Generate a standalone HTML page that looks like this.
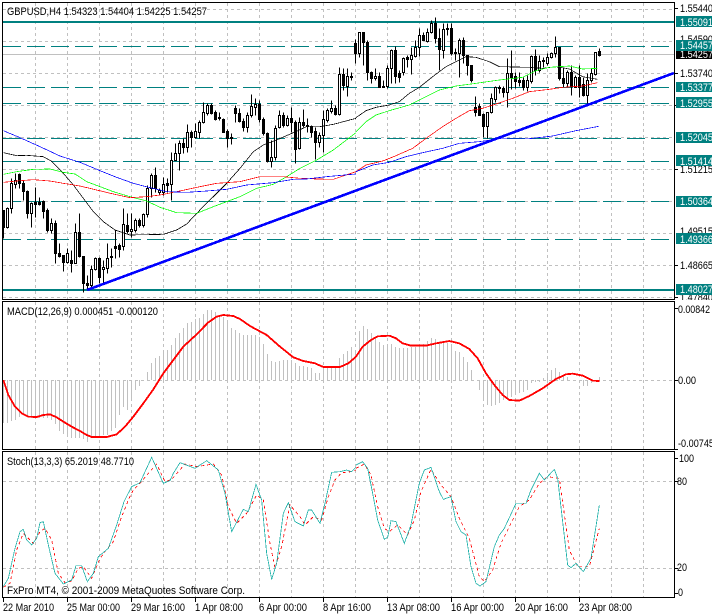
<!DOCTYPE html>
<html><head><meta charset="utf-8"><style>
html,body{margin:0;padding:0;background:#fff;width:712px;height:615px;overflow:hidden}
svg{display:block;position:absolute;left:0;top:0}
text{font-family:"Liberation Sans",sans-serif;font-size:11px;fill:#000}
.l{shape-rendering:crispEdges;fill:none}
</style></head><body>
<svg width="712" height="615" viewBox="0 0 712 615" xmlns="http://www.w3.org/2000/svg">
<rect width="712" height="615" fill="#fff"/>
<g id="grid" class="l" stroke="#c0c0c0" stroke-dasharray="3 3"></g>
<path class="l" d="M3 54.5H674" stroke="#c0c0c0"/>
<g class="l" stroke="#008080">
<path d="M3 22H674M3 290H674" stroke-width="2"/>
<path d="M3 46.5H674M3 87.5H674M3 103.5H674M3 138.5H674M3 161.5H674M3 201.5H674M3 239.5H674" stroke-dasharray="18 6"/>
</g>
<g id="hist" class="l" stroke="#c0c0c0"></g>
<g id="candles"></g>
<g class="l" stroke-width="2.2" transform="scale(.33333)">
<polyline stroke="#000" points="10,458 50,467 80,466 130,470 155,484 190,520 220,555 250,595 280,635 310,665 345,690 390,705 490,703 530,690 560,672 600,630 640,590 680,550 720,505 760,455 790,435 830,420 880,398 920,380 960,380 1000,373 1068,355"/>
<polyline stroke="#0f0" points="10,523 50,515 100,508 150,507 190,517 225,522 260,545 300,560 340,575 390,590 440,603 480,622 530,638 590,640 640,620 680,605 720,590 770,565 820,553 860,530 900,505 950,480 1000,450 1068,398"/>
<polyline stroke="#f00" points="10,547 50,543 100,539 150,543 190,550 240,558 290,570 340,582 390,593 440,590 480,585 530,575 600,560 650,550 720,545 780,530 850,530 900,535 950,537 1000,538 1068,515"/>
<polyline stroke="#00f" points="10,392 60,413 120,440 180,468 240,487 300,512 350,532 400,550 450,563 500,575 560,577 620,573 680,568 740,555 820,548 880,538 920,537 980,530 1068,522"/>
</g>
<g class="l" stroke-width="2.2" transform="translate(356 0) scale(.33333)">
<polyline stroke="#000" points="0,353 30,332 60,322 100,315 130,305 160,280 190,262 230,230 270,200 300,185 330,170 360,172 400,185 430,200 520,202 560,205 600,200 640,207 680,230 725,238"/>
<polyline stroke="#0f0" points="0,395 30,365 60,345 100,332 160,315 200,295 250,270 300,258 360,250 430,240 500,232 540,212 580,202 640,198 680,207 725,205"/>
<polyline stroke="#f00" points="0,515 30,495 80,483 120,467 170,445 220,408 260,380 300,355 340,332 380,325 420,312 470,295 520,275 580,268 620,262 680,258 725,248"/>
<polyline stroke="#00f" points="0,515 50,495 100,487 150,470 200,458 260,445 310,430 370,425 430,416 520,416 590,408 660,392 728,379"/>
</g>
<path class="l" d="M87 290L674 73" stroke="#0000ff" stroke-width="2.6"/>

<g class="l" stroke="#f00" stroke-width="5.5" stroke-linejoin="round" transform="translate(0 295) scale(.33333)">
<polyline points="10,255 25,300 45,335 65,355 85,365 110,366 130,360 150,358 170,367 190,380 215,395 240,408 260,420 275,426 320,426 350,418 375,395 400,365 430,325 460,283 490,235 520,195 550,155 590,118 625,82 650,65 670,60 700,63 720,72 750,93 800,120 840,155 880,187 910,198 945,205 970,216 1020,216 1045,205 1068,185"/>
</g>
<g class="l" stroke="#f00" stroke-width="5.5" stroke-linejoin="round" transform="translate(356 295) scale(.33333)">
<polyline points="0,185 20,155 45,135 65,124 100,122 120,130 140,145 165,152 210,152 240,145 280,138 310,145 340,162 365,190 390,235 415,270 440,300 460,315 490,317 520,303 560,280 600,252 630,238 650,236 680,242 710,257 730,258"/>
</g>

<g class="l" stroke-width="2.4" transform="translate(0 450) scale(.33333)">
<polyline stroke="#f00" stroke-dasharray="9 9" points="10,412 30,400 50,300 70,250 85,265 100,280 120,245 135,235 155,270 175,370 195,398 215,393 235,355 250,350 275,385 300,325 320,298 340,275 365,200 385,150 400,120 420,100 445,70 470,42 495,95 515,88 535,65 555,42 590,50 640,42 665,75 685,170 710,220 740,190 770,135 790,150 810,280 825,355 845,290 870,165 900,200 915,225 940,200 965,210 985,140 1005,90 1025,68 1055,65 1068,60"/>
<polyline stroke="#20b2aa" points="10,410 25,385 45,295 60,245 70,238 80,270 95,285 110,265 120,218 130,215 145,285 165,370 190,402 215,390 228,347 245,347 262,395 280,370 295,320 325,295 350,225 372,155 395,110 420,98 455,22 490,100 510,92 520,70 540,38 585,55 620,32 655,60 675,130 695,245 730,178 745,185 768,103 785,150 800,310 815,388 830,340 850,190 865,158 885,215 910,228 925,180 935,180 960,220 975,160 995,67 1020,65 1040,60 1055,65 1068,52"/>
</g>
<g class="l" stroke-width="2.4" transform="translate(356 450) scale(.33333)">
<polyline stroke="#f00" stroke-dasharray="9 9" points="0,55 25,42 45,75 65,170 85,235 100,245 125,225 155,255 175,210 195,125 225,58 255,105 285,140 310,205 340,265 370,380 385,395 410,360 435,280 470,210 490,170 520,150 550,100 575,80 610,85 640,300 665,350 700,350 730,235"/>
<polyline stroke="#20b2aa" points="0,45 20,35 35,55 50,130 65,210 85,268 95,262 105,212 120,215 145,280 165,225 190,100 205,60 225,52 250,125 262,148 285,140 300,215 315,245 330,255 345,350 360,400 372,408 390,395 415,290 430,255 445,235 480,160 510,160 525,120 550,70 565,90 595,58 605,85 635,345 645,353 660,340 682,365 705,325 730,165"/>
</g>

<g class="l" stroke="#000">
<rect x="2.5" y="2.5" width="672" height="297"/>
<rect x="2.5" y="301.5" width="672" height="148"/>
<rect x="2.5" y="451.5" width="672" height="146"/>
<path d="M675 8.5h3M675 73.5h3M675 169.5h3M675 265.5h3M675 297.5h3M675 105.5h3M675 308.5h3M675 380.5h3M675 449.5h3M675 458.5h3M675 481.5h3M675 568.5h3M675 593.5h3"/>
<path id="xt" d=""/>
</g>

<g>
<text x="680" y="12" textLength="33" lengthAdjust="spacingAndGlyphs">1.55440</text>
<text x="680" y="43" textLength="33" lengthAdjust="spacingAndGlyphs">1.54590</text>
<text x="680" y="77" textLength="33" lengthAdjust="spacingAndGlyphs">1.53740</text>
<text x="680" y="173" textLength="33" lengthAdjust="spacingAndGlyphs">1.51215</text>
<text x="680" y="235" textLength="33" lengthAdjust="spacingAndGlyphs">1.49515</text>
<text x="680" y="269" textLength="33" lengthAdjust="spacingAndGlyphs">1.48665</text>
<text x="680" y="301" textLength="33" lengthAdjust="spacingAndGlyphs">1.47840</text>
</g>
<rect x="675" y="300" width="37" height="3" fill="#fff"/>
<rect x="676" y="51" width="36" height="8" fill="#000"/>
<text x="680" y="58" textLength="33" lengthAdjust="spacingAndGlyphs" style="fill:#fff">1.54257</text>
<g fill="#008080">
<rect x="676" y="16" width="36" height="11"/>
<rect x="676" y="40" width="36" height="11"/>
<rect x="676" y="82" width="36" height="10"/>
<rect x="676" y="97" width="36" height="11"/>
<rect x="676" y="132" width="36" height="11"/>
<rect x="676" y="155" width="36" height="11"/>
<rect x="676" y="196" width="36" height="11"/>
<rect x="676" y="233" width="36" height="11"/>
<rect x="676" y="284" width="36" height="11"/>
</g>
<g style="fill:#fff">
<text style="fill:#fff" x="680" y="26" textLength="33" lengthAdjust="spacingAndGlyphs">1.55091</text>
<text style="fill:#fff" x="680" y="49" textLength="33" lengthAdjust="spacingAndGlyphs">1.54457</text>
<text style="fill:#fff" x="680" y="91" textLength="33" lengthAdjust="spacingAndGlyphs">1.53377</text>
<text style="fill:#fff" x="680" y="107" textLength="33" lengthAdjust="spacingAndGlyphs">1.52955</text>
<text style="fill:#fff" x="680" y="141" textLength="33" lengthAdjust="spacingAndGlyphs">1.52045</text>
<text style="fill:#fff" x="680" y="165" textLength="33" lengthAdjust="spacingAndGlyphs">1.51414</text>
<text style="fill:#fff" x="680" y="205" textLength="33" lengthAdjust="spacingAndGlyphs">1.50364</text>
<text style="fill:#fff" x="680" y="243" textLength="33" lengthAdjust="spacingAndGlyphs">1.49366</text>
<text style="fill:#fff" x="680" y="293" textLength="33" lengthAdjust="spacingAndGlyphs">1.48027</text>
</g>
<text x="678" y="313" textLength="32" lengthAdjust="spacingAndGlyphs">0.00842</text>
<text x="678" y="384" textLength="18" lengthAdjust="spacingAndGlyphs">0.00</text>
<text x="678" y="447" textLength="36" lengthAdjust="spacingAndGlyphs">-0.00745</text>
<text x="679" y="462" textLength="15" lengthAdjust="spacingAndGlyphs">100</text>
<text x="677" y="485" textLength="10" lengthAdjust="spacingAndGlyphs">80</text>
<text x="677" y="571" textLength="10" lengthAdjust="spacingAndGlyphs">20</text>
<text x="678" y="596" textLength="5" lengthAdjust="spacingAndGlyphs">0</text>

<text x="7" y="15" textLength="200" lengthAdjust="spacingAndGlyphs">GBPUSD,H4  1.54323 1.54404 1.54225 1.54257</text>
<text x="7" y="315" textLength="151" lengthAdjust="spacingAndGlyphs">MACD(12,26,9) 0.000451 -0.000120</text>
<text x="7" y="465" textLength="127" lengthAdjust="spacingAndGlyphs">Stoch(13,3,3) 65.2019 48.7710</text>
<text x="7" y="594" textLength="238" lengthAdjust="spacingAndGlyphs">FxPro MT4, © 2001-2009 MetaQuotes Software Corp.</text>

<text x="3" y="611" textLength="51" lengthAdjust="spacingAndGlyphs">22 Mar 2010</text>
<text x="67" y="611" textLength="53" lengthAdjust="spacingAndGlyphs">25 Mar 00:00</text>
<text x="131" y="611" textLength="54" lengthAdjust="spacingAndGlyphs">29 Mar 16:00</text>
<text x="195" y="611" textLength="48" lengthAdjust="spacingAndGlyphs">1 Apr 08:00</text>
<text x="259" y="611" textLength="48" lengthAdjust="spacingAndGlyphs">6 Apr 00:00</text>
<text x="323" y="611" textLength="48" lengthAdjust="spacingAndGlyphs">8 Apr 16:00</text>
<text x="387" y="611" textLength="53" lengthAdjust="spacingAndGlyphs">13 Apr 08:00</text>
<text x="451" y="611" textLength="53" lengthAdjust="spacingAndGlyphs">16 Apr 00:00</text>
<text x="515" y="611" textLength="53" lengthAdjust="spacingAndGlyphs">20 Apr 16:00</text>
<text x="579" y="611" textLength="53" lengthAdjust="spacingAndGlyphs">23 Apr 08:00</text>
</svg>
<script>
(function(){
var g='',i;
var vs='';
for(i=0;i<20;i++){var x=35.5+32*i;vs+='M'+x+' 3V299M'+x+' 302V449M'+x+' 452V597';}
var hy=[9.5,41.5,73.5,105.5,137.5,169.5,201.5,233.5,265.5,297.5,380.5,481.5,568.5];
for(i=0;i<hy.length;i++){vs+='M3 '+hy[i]+'H674';}
document.getElementById('grid').innerHTML='<path d="'+vs+'"/>';
var xt='';for(i=0;i<10;i++){var tx=3.5+64*i;xt+='M'+tx+' 598V602';}
document.getElementById('xt').setAttribute('d',xt);
var c=[
[630,715,630,680,0],[620,685,625,680,1],[535,640,550,625,1],[520,565,540,552,1],[520,565,522,550,0],[540,600,548,572,0],[570,655,572,640,0],[605,680,610,640,1],[560,650,605,612,0],[590,615,605,612,0],
[600,655,602,632,0],[625,695,630,690,0],[655,700,670,690,1],[660,790,668,760,0],[730,770,760,768,0],[765,812,765,785,0],[745,790,760,785,1],[750,815,780,788,0],[670,790,695,790,1],[640,770,695,768,0],
[768,875,768,850,0],[825,870,850,855,0],[795,865,808,855,1],[770,810,775,808,1],[770,850,775,830,0],[780,848,800,808,1],[730,820,775,803,1],[745,800,768,772,1],[690,775,738,745,0],[730,770,735,748,0],
[625,750,672,738,1],[640,700,675,692,0],[640,710,688,692,1],[655,695,660,690,1],[655,680,660,675,0],[640,680,642,675,1],[555,650,565,642,1],[520,590,525,565,1],[500,575,525,565,0],[565,585,570,575,1],
[530,585,552,575,1],[535,575,550,555,0],[455,600,480,553,1],[430,480,460,480,1],[420,510,430,460,1],[415,460,428,442,0],[372,455,397,440,1],[390,440,397,412,0],[370,415,392,412,1],[360,415,365,395,1],
[307,368,337,365,1],[310,345,315,340,1],[310,342,315,340,0],[330,360,335,358,0],[335,360,350,355,0],[355,397,357,395,0],[388,440,392,413,0],[400,432,412,414,0],[315,365,325,338,0],[325,365,338,362,0],
[355,393,362,382,0],[335,395,345,382,1],[283,350,318,345,1],[295,345,312,320,1],[300,365,312,358,0],[352,405,357,400,0],[395,485,400,482,0],[420,500,470,482,1],[375,480,385,470,1],[330,385,345,382,1],
[335,380,345,375,0],[345,378,355,375,1],[322,395,355,365,0],[360,490,365,447,0],[350,447,367,445,1],[328,380,365,375,0],[355,395,375,378,0],[375,410,378,395,0],[380,478,393,425,0],[395,440,405,425,1],
[330,455,358,405,1],[325,365,330,360,1],[300,340,325,333,1],[315,345,325,342,0],[200,345,222,342,1],[205,270,222,255,0],[205,288,228,258,1],[215,240,228,230,0],[118,190,130,160,0]
];
var d=[
[95,170,95,158,1],[95,195,97,125,0],[120,240,125,215,0],[212,250,215,235,0],[205,240,228,235,1],[215,262,228,260,0],[240,262,258,260,0],[195,265,205,258,1],[148,250,150,205,1],[137,250,150,228,0],
[210,245,218,230,0],[170,225,175,215,1],[165,200,172,178,0],[140,222,165,178,1],[120,170,140,168,1],[85,168,105,140,1],[95,120,105,120,0],[85,125,97,122,1],[60,100,70,97,1],[52,130,70,113,0],
[85,210,113,148,0],[68,175,88,150,1],[70,105,85,88,1],[70,165,85,160,0],[145,180,155,160,0],[115,232,120,158,1],[110,190,120,165,0],[165,225,165,195,0],[195,245,195,240,0],[288,348,320,335,0],
[310,345,318,345,0],[340,410,342,378,0],[335,415,337,378,1],[280,338,295,337,1],[258,305,262,298,1],[255,278,260,264,0],[258,290,265,275,0],[175,320,218,275,1],[150,268,218,232,0],[215,265,228,242,0],
[215,258,240,245,0],[230,270,240,262,0],[225,272,240,262,1],[165,250,168,242,1],[148,225,168,210,0],[165,215,182,210,1],[170,200,180,182,0],[160,195,170,188,1],[155,175,158,170,1],[108,170,140,160,1],
[140,240,142,235,0],[205,262,235,248,0],[210,260,215,248,1],[195,285,215,258,0],[225,262,230,260,1],[195,290,230,262,0],[230,288,252,285,0],[220,310,240,285,1],[205,245,220,240,1],[155,225,157,222,1],[143,168,152,165,0]
];
function h3(v){return Math.round(v/3)+.5;}
var wick='',black='',white='';
function add(a,k){
 var x=3.5+4*k,hi=h3(a[0]),lo=h3(a[1]),t=h3(a[2]),b=h3(a[3]);
 wick+='M'+x+' '+hi+'V'+lo;
 if(a[4]){if(b-t<1)b=t+1;white+='<rect x="'+(x-1)+'" y="'+t+'" width="2" height="'+(b-t)+'"/>';}
 else{var h=Math.max(1,b-t+1);black+='<rect x="'+(x-1.5)+'" y="'+(t-.5)+'" width="3" height="'+h+'"/>';}
}
for(i=0;i<c.length;i++)add(c[i],i);
for(i=0;i<d.length;i++)add(d[i],89+i);
document.getElementById('candles').innerHTML='<g class="l"><path d="'+wick+'" stroke="#000"/></g><g shape-rendering="crispEdges" fill="#fff" stroke="#000">'+white+'</g><g shape-rendering="crispEdges" fill="#000">'+black+'</g>';
var m1=[385,385,378,375,365,360,365,368,370,370,370,368,375,388,408,418,425,430,428,428,432,440,430,425,425,420,420,408,398,360,335,345,312,285,272,258,232,205,190,182,165,165,150,130,115,100,85,80,72,68,58,45,45,50,60,65,85,100,105,115,120,120,120,120,125,148,178,198,200,198,195,195,195,205,212,212,215,220,235,235,215,215,213,212,190,178,168,155,165];
var m2=[108,92,102,115,130,140,150,147,147,155,160,160,158,155,155,155,148,138,130,132,142,145,145,150,168,172,185,200,225,255,285,318,330,332,330,325,315,310,305,300,295,290,285,265,260,260,248,235,225,218,230,240,245,255,258,262,272,272,265,258,245];
var hp='';
for(i=0;i<m1.length;i++){hp+='M'+(3.5+4*i)+' 380V'+(295+Math.round(m1[i]/3));}
for(i=0;i<m2.length;i++){hp+='M'+(3.5+4*(89+i))+' 380V'+(295+Math.round(m2[i]/3));}
document.getElementById('hist').innerHTML='<path d="'+hp+'"/>';
})();
</script>
</body></html>
